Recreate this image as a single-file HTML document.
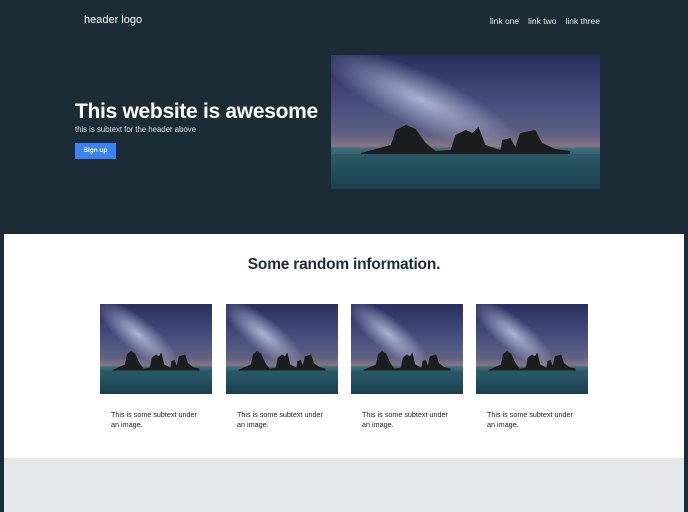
<!DOCTYPE html>
<html><head><style>
*{margin:0;padding:0;box-sizing:border-box}
body{width:688px;height:512px;overflow:hidden;background:#1c2c37;font-family:"Liberation Sans",sans-serif;position:relative}
.abs{position:absolute}
.logo{left:84px;top:14px;color:#fff;font-size:11px}
.links{top:16px;right:88px;color:#eee;font-size:8.5px}
.links span{margin-left:9px}
.sub{left:75px;top:125px;color:#ddd;font-size:8px;letter-spacing:-0.1px}
.btn{left:75px;top:143px;width:41px;height:16px;background:#3b82f6;color:#fff;font-size:6.5px;font-weight:bold;text-align:center;line-height:16px}
.white{left:4px;top:234px;width:680px;height:224px;background:#fff}
.gray{left:4px;top:458px;width:680px;height:54px;background:#e5e7eb}
.cap{font-size:7.2px;color:#222;line-height:10px;width:90px}
svg{display:block}
</style></head><body>
<svg width="0" height="0" style="position:absolute">
<defs>
<linearGradient id="sky" x1="0" y1="0" x2="0" y2="1">
<stop offset="0" stop-color="#2a2f5e"/><stop offset="0.35" stop-color="#474c7e"/><stop offset="0.6" stop-color="#5f6284"/><stop offset="0.68" stop-color="#8a7585"/><stop offset="0.7" stop-color="#3d6d7a"/><stop offset="1" stop-color="#13303f"/>
</linearGradient>
<radialGradient id="mw" cx="0.5" cy="0.5" r="0.5"><stop offset="0" stop-color="#d0d3ee" stop-opacity="0.75"/><stop offset="1" stop-color="#c8cbe8" stop-opacity="0"/></radialGradient>
<symbol id="img" viewBox="0 0 270 134" preserveAspectRatio="none">
<rect width="270" height="134" fill="url(#sky)"/>
<ellipse cx="90" cy="45" rx="110" ry="28" fill="url(#mw)" transform="rotate(25 90 45)"/>
<path d="M30 98 L60 90 L65 75 L75 70 L85 74 L95 88 L105 96 L120 95 L125 80 L135 75 L142 78 L148 72 L155 90 L170 95 L172 85 L180 83 L185 92 L190 78 L205 75 L212 88 L225 94 L240 96 L240 99 L30 99Z" fill="#1b1d1e"/>
<rect y="99" width="270" height="35" fill="#1f5060" opacity="0.5"/>
</symbol>
</defs></svg>
<div class="abs logo">header logo</div>
<div class="abs links"><span>link one</span><span>link two</span><span>link three</span></div>
<div class="abs" style="left:331px;top:55px"><svg width="269" height="134"><use href="#img"/></svg></div>
<div class="abs" style="left:75px;top:100px;color:#fff;font-size:21px;font-weight:bold;letter-spacing:-0.3px">This website is awesome</div>
<div class="abs sub">this is subtext for the header above</div>
<div class="abs btn">Sign up</div>
<div class="abs white"></div>
<div class="abs gray"></div>
<div class="abs" style="left:0;width:688px;top:256px;text-align:center;font-size:15.5px;font-weight:bold;color:#1c2c37;letter-spacing:-0.2px">Some random information.</div>
<div class="abs" style="left:100px;top:304px"><svg width="112" height="90"><use href="#img"/></svg></div>
<div class="abs" style="left:226px;top:304px"><svg width="112" height="90"><use href="#img"/></svg></div>
<div class="abs" style="left:351px;top:304px"><svg width="112" height="90"><use href="#img"/></svg></div>
<div class="abs" style="left:476px;top:304px"><svg width="112" height="90"><use href="#img"/></svg></div>
<div class="abs cap" style="left:111px;top:410px">This is some subtext under an image.</div>
<div class="abs cap" style="left:237px;top:410px">This is some subtext under an image.</div>
<div class="abs cap" style="left:362px;top:410px">This is some subtext under an image.</div>
<div class="abs cap" style="left:487px;top:410px">This is some subtext under an image.</div>
</body></html>
